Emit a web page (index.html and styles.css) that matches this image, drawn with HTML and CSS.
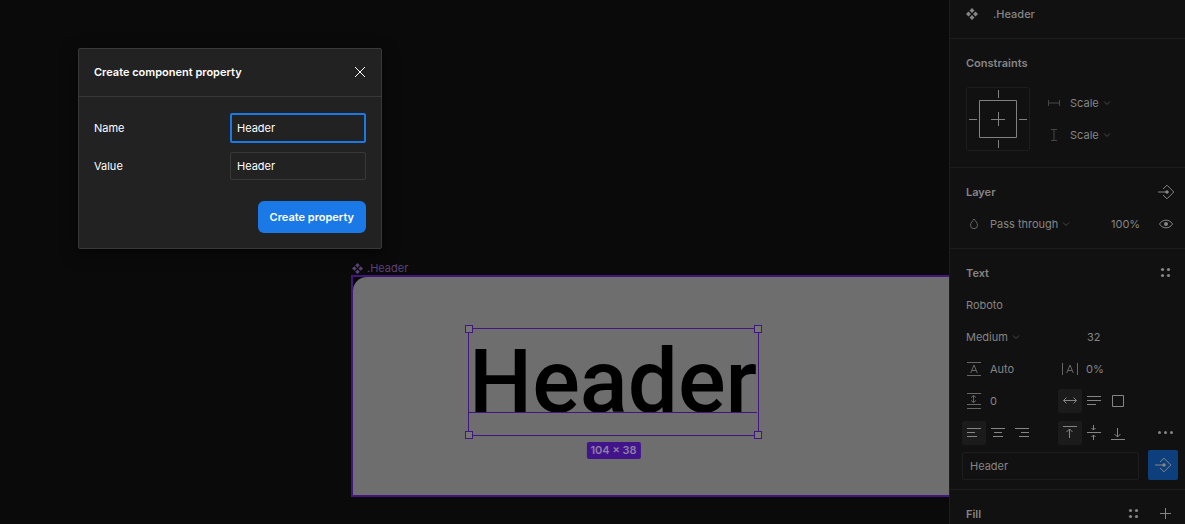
FILE: index.html
```html
<!DOCTYPE html>
<html lang="en">
<head>
<meta charset="utf-8">
<meta name="viewport" content="width=device-width, initial-scale=1">
<title>Create component property</title>
<link rel="stylesheet" href="styles.css">
</head>
<body>
<svg class="defs" aria-hidden="true">
  <symbol id="component" viewBox="0 0 12 12"><path fill="currentColor" d="M6 0 8.500 2.500 6 5 3.500 2.500ZM6 7 8.500 9.500 6 12 3.500 9.500ZM2.500 3.500 5 6 2.500 8.500 0 6ZM9.500 3.500 12 6 9.500 8.500 7 6Z"/></symbol>
  <symbol id="chevron" viewBox="0 0 8 8"><path fill="none" stroke="currentColor" d="M1 2.500 4 5.500 7 2.500"/></symbol>
  <symbol id="apply" viewBox="0 0 24 24"><path fill="none" stroke="currentColor" d="M4 12h9M9 9 13 5.200 19.800 12 13 18.800 9 15"/><circle cx="13" cy="12" r="1.800" fill="currentColor" stroke="none"/></symbol>
  <symbol id="grid-dots" viewBox="0 0 24 24"><g fill="currentColor" stroke="none"><circle cx="8.500" cy="8.500" r="1.600"/><circle cx="14.500" cy="8.500" r="1.600"/><circle cx="8.500" cy="14.500" r="1.600"/><circle cx="14.500" cy="14.500" r="1.600"/></g></symbol>
</svg>
<div class="editor">
  <main class="canvas">
    <div class="frame-label"><svg class="glyph-small"><use href="#component"/></svg><span>.Header</span></div>
    <div class="frame"><div class="frame-fill"></div></div>
    <div class="selection">
      <span class="selection-text">Header</span>
      <i class="baseline"></i>
      <i class="handle top left"></i><i class="handle top right"></i>
      <i class="handle bottom left"></i><i class="handle bottom right"></i>
      <span class="size-badge">104 × 38</span>
    </div>
  </main>

  <aside class="sidebar">
    <section class="section component-row"><svg class="glyph"><use href="#component"/></svg><span>.Header</span></section>

    <section class="section">
      <header class="section-head"><h2>Constraints</h2></header>
      <div class="constraints">
        <svg class="constraint-box" viewBox="0 0 64 64"><rect x=".5" y=".5" width="63" height="63" rx="1.500" fill="none" stroke="#1d1d1d"/><path d="M13.500 13.500h37v37h-37ZM32.500 3v8M32.500 53v8M3 32.500h8M53 32.500h8M25 32.500h14M32.500 25v14" fill="none" stroke="#818181"/></svg>
        <div class="constraint-fields">
          <label class="field"><svg class="icon faint" viewBox="0 0 24 24"><path d="M6.500 9v6M17.500 9v6M7 12h10"/></svg><select aria-label="Horizontal constraint"><option>Scale</option></select><svg class="chevron"><use href="#chevron"/></svg></label>
          <label class="field"><svg class="icon faint" viewBox="0 0 24 24"><path d="M9 6.500h6M9 17.500h6M12 7v10"/></svg><select aria-label="Vertical constraint"><option>Scale</option></select><svg class="chevron"><use href="#chevron"/></svg></label>
        </div>
      </div>
    </section>

    <section class="section layer">
      <header class="section-head"><h2>Layer</h2><button class="icon-button" aria-label="Create property"><svg class="icon"><use href="#apply"/></svg></button></header>
      <div class="layer-row">
        <svg class="icon dim" viewBox="0 0 24 24"><path d="M12 7C10.500 9 8.500 11 8.500 13.200a3.500 3.500 0 0 0 7 0C15.500 11 13.500 9 12 7Z"/></svg>
        <label class="field"><select aria-label="Blend mode"><option>Pass through</option></select><svg class="chevron"><use href="#chevron"/></svg></label>
        <input aria-label="Opacity" value="100%">
        <button class="icon-button" aria-label="Toggle visibility"><svg class="icon" viewBox="0 0 24 24"><path d="M5.500 12C8.500 6.900 15.500 6.900 18.500 12C15.500 17.100 8.500 17.100 5.500 12Z"/><circle cx="12" cy="12" r="2" fill="currentColor" stroke="none"/></svg></button>
      </div>
    </section>

    <section class="section text-section">
      <header class="section-head"><h2>Text</h2><button class="icon-button" aria-label="Text styles"><svg class="icon"><use href="#grid-dots"/></svg></button></header>
      <div class="text-grid"><button class="wide font-name">Roboto</button></div>
      <div class="text-grid">
        <label class="field wide"><select aria-label="Font weight"><option>Medium</option></select><svg class="chevron"><use href="#chevron"/></svg></label>
        <input class="value-second" aria-label="Font size" value="32">
      </div>
      <div class="text-grid">
        <svg class="icon dim" viewBox="0 0 24 24"><path d="M5 5.500h14M5 18.500h14M8.700 16 12 8l3.300 8M9.800 13.500h4.400"/></svg>
        <input aria-label="Line height" value="Auto">
        <svg class="icon dim" viewBox="0 0 24 24"><path d="M4.500 6v12M19.500 6v12M8.700 16 12 8l3.300 8M9.800 13.500h4.400"/></svg>
        <input aria-label="Letter spacing" value="0%">
      </div>
      <div class="text-grid">
        <svg class="icon dim" viewBox="0 0 24 24"><path d="M5 4.500h14M5 15.500h14M5 19.500h14M11.500 6.500v7M9 8.500 11.500 6.500l2.500 2M9 11.500 11.500 13.500l2.500-2"/></svg>
        <input aria-label="Paragraph spacing" value="0">
        <div class="group resize">
          <button class="toggle on" aria-label="Auto width"><svg class="icon" viewBox="0 0 24 24"><path d="M5.500 11.500h13M8.500 8.500l-3 3 3 3M15.500 8.500l3 3-3 3"/></svg></button>
          <button class="toggle" aria-label="Auto height"><svg class="icon" viewBox="0 0 24 24"><path d="M5 7.500h14M5 11.500h14M5 15.500h9"/></svg></button>
          <button class="toggle" aria-label="Fixed size"><svg class="icon" viewBox="0 0 24 24"><path d="M6.500 6.500h11v11h-11Z"/></svg></button>
        </div>
      </div>
      <div class="text-grid">
        <div class="group align">
          <button class="toggle on" aria-label="Align left"><svg class="icon" viewBox="0 0 24 24"><path d="M5 7.500h14M5 11.500h8M5 15.500h10"/></svg></button>
          <button class="toggle" aria-label="Align center"><svg class="icon" viewBox="0 0 24 24"><path d="M5 7.500h14M8 11.500h8M7 15.500h10"/></svg></button>
          <button class="toggle" aria-label="Align right"><svg class="icon" viewBox="0 0 24 24"><path d="M5 7.500h14M11 11.500h8M9 15.500h10"/></svg></button>
        </div>
        <div class="group resize">
          <button class="toggle on" aria-label="Align top"><svg class="icon" viewBox="0 0 24 24"><path d="M5 5.500h14M11.500 17V8M8.500 11 11.500 8l3 3"/></svg></button>
          <button class="toggle" aria-label="Align middle"><svg class="icon" viewBox="0 0 24 24"><path d="M5 11.500h14M11.500 4v5M9.500 7l2 2 2-2M11.500 19v-5M9.500 16l2-2 2 2"/></svg></button>
          <button class="toggle" aria-label="Align bottom"><svg class="icon" viewBox="0 0 24 24"><path d="M5 18.500h14M11.500 7v9M8.500 13l3 3 3-3"/></svg></button>
        </div>
        <button class="icon-button more" aria-label="More text options"><svg class="icon" viewBox="0 0 24 24"><g fill="currentColor" stroke="none"><circle cx="5.500" cy="11.500" r="1.500"/><circle cx="11.500" cy="11.500" r="1.500"/><circle cx="17.500" cy="11.500" r="1.500"/></g></svg></button>
      </div>
      <div class="content-row"><input class="boxed" aria-label="Text content" value="Header"><button class="apply" aria-label="Create text property"><svg class="icon"><use href="#apply"/></svg></button></div>
    </section>

    <section class="section fill">
      <header class="section-head"><h2>Fill</h2><button class="icon-button" aria-label="Fill styles"><svg class="icon"><use href="#grid-dots"/></svg></button><button class="icon-button" aria-label="Add fill"><svg class="icon" viewBox="0 0 24 24"><path d="M6 11.500h11M11.500 6v11"/></svg></button></header>
    </section>
  </aside>

  <form class="modal" role="dialog" aria-labelledby="dialog-title">
    <header class="modal-head"><h1 id="dialog-title">Create component property</h1><button type="button" class="close" aria-label="Close"><svg viewBox="0 0 12 12"><path d="M1 1 11 11M11 1 1 11"/></svg></button></header>
    <div class="modal-body">
      <div class="modal-row"><label for="name">Name</label><input class="focused" id="name" value="Header"></div>
      <div class="modal-row"><label for="value">Value</label><input id="value" value="Header"></div>
      <button type="button" class="primary">Create property</button>
    </div>
  </form>
</div>
</body>
</html>
```

FILE: styles.css
```css
* { box-sizing: border-box; }

body {
  margin: 0;
  overflow: hidden;
  background: #0a0a0a;
  color: #858585;
  font: 11px/16px Inter, "Liberation Sans", sans-serif;
}

h1, h2 { margin: 0; font-size: 11px; font-weight: 600; line-height: 16px; }
button, input, select { margin: 0; padding: 0; border: 0; border-radius: 0; background: none; color: inherit; font: inherit; outline: 0; }
input { width: 100%; min-width: 0; }
select { appearance: none; field-sizing: content; }
button { display: flex; align-items: center; justify-content: center; }
svg { display: block; flex: none; }
.defs { position: absolute; width: 0; height: 0; }

.editor { position: relative; display: flex; height: 100vh; overflow: hidden; }

/* Canvas */
.canvas { position: relative; flex: 1; overflow: hidden; }
.frame-label { position: absolute; left: 352px; top: 260px; display: flex; align-items: center; gap: 4px; color: #5b4378; }
.glyph-small { width: 11px; height: 11px; }
.frame { position: absolute; left: 351px; top: 275px; width: 840px; height: 222px; border: 2px solid #41177f; background: #070707; }
.frame-fill { height: 100%; border-radius: 14px 14px 0 0; background: #6e6e6e; }
.selection { position: absolute; left: 468px; top: 328px; width: 291px; height: 108px; border: 1px solid #41177f; }
.selection-text { display: block; color: #000; font: 500 89px/106px Roboto, sans-serif; white-space: nowrap; }
.baseline { position: absolute; left: 0; right: 1px; top: 83px; height: 1px; background: #41177f; }
.handle { position: absolute; width: 8px; height: 8px; border: 1px solid #41177f; background: #777; }
.top { top: -4px; }
.bottom { bottom: -4px; }
.left { left: -4px; }
.right { right: -4px; }
.size-badge { position: absolute; top: 113px; left: 50%; transform: translateX(-50%); padding: 0 4px; border-radius: 2px; background: #41148c; color: #8d7fa5; font-weight: 600; line-height: 17px; white-space: nowrap; }

/* Properties panel */
.sidebar { flex: none; width: 236px; border-left: 1px solid #1d1d1d; background: #111; }
.section { padding: 8px 3px 8px 8px; border-bottom: 1px solid #1d1d1d; }
.section-head { display: flex; align-items: center; height: 32px; padding-left: 8px; }
.section-head h2 { flex: 1; }
.icon { width: 24px; height: 24px; fill: none; stroke: currentColor; justify-self: center; }
.dim { color: #666; }
.faint { color: #464646; }
.chevron { width: 8px; height: 8px; color: #484848; }
.icon-button { width: 32px; height: 32px; }

.component-row { display: flex; align-items: center; gap: 15px; padding: 4px 16px 14px; font-weight: 500; line-height: 20px; }
.glyph { width: 12px; height: 12px; }

.constraints { display: flex; gap: 12px; padding: 8px; }
.constraint-box { width: 64px; height: 64px; }
.constraint-fields { display: flex; flex-direction: column; }
.field { display: flex; align-items: center; gap: 4px; height: 32px; }

.layer-row { display: grid; grid-template-columns: 32px 1fr 39px 32px; align-items: center; }

.text-section { padding-bottom: 9px; }
.text-grid { display: grid; grid-template-columns: 32px 64px 32px 1fr 32px; align-items: center; height: 32px; }
.wide { grid-column: span 2; padding-left: 8px; }
.font-name { justify-content: flex-start; }
.value-second { grid-column: 4; padding-left: 1px; }
.group { display: flex; padding-left: 4px; }
.align { grid-column: 1 / 3; }
.resize { grid-column: 3 / 5; }
.toggle { width: 24px; height: 24px; border-radius: 2px; }
.on { background: #1b1b1b; }
.content-row { display: flex; align-items: flex-end; gap: 9px; padding: 1px 4px 0; }
.boxed { flex: 1; height: 28px; padding: 0 7px; border: 1px solid #1d1d1d; border-radius: 2px; }
.apply { flex: none; width: 30px; height: 30px; border-radius: 2px; background: #0d3f7d; }
.fill { border-bottom: 0; }

/* Dialog */
.modal { position: absolute; left: 78px; top: 48px; width: 304px; border: 1px solid #393939; border-radius: 2px; background: #222; color: #fff; box-shadow: 0 4px 16px #0008; }
.modal-head { display: flex; align-items: center; justify-content: space-between; height: 48px; padding: 0 15px 1px; border-bottom: 1px solid #383838; }
.close svg { width: 12px; height: 12px; fill: none; stroke: #fff; }
.modal-body { display: flex; flex-direction: column; gap: 9px; padding: 16px 15px 15px; }
.modal-row { display: flex; align-items: center; justify-content: space-between; }
.modal-row input { width: 136px; height: 28px; padding: 0 6px; border: 1px solid #383838; border-radius: 2px; }
.modal-row .focused { height: 30px; padding: 0 5px; border: 2px solid #1a79e6; }
.primary { align-self: flex-end; height: 32px; margin-top: 12px; padding: 0 12px; border-radius: 6px; background: #1a79e6; font-weight: 600; }
```
